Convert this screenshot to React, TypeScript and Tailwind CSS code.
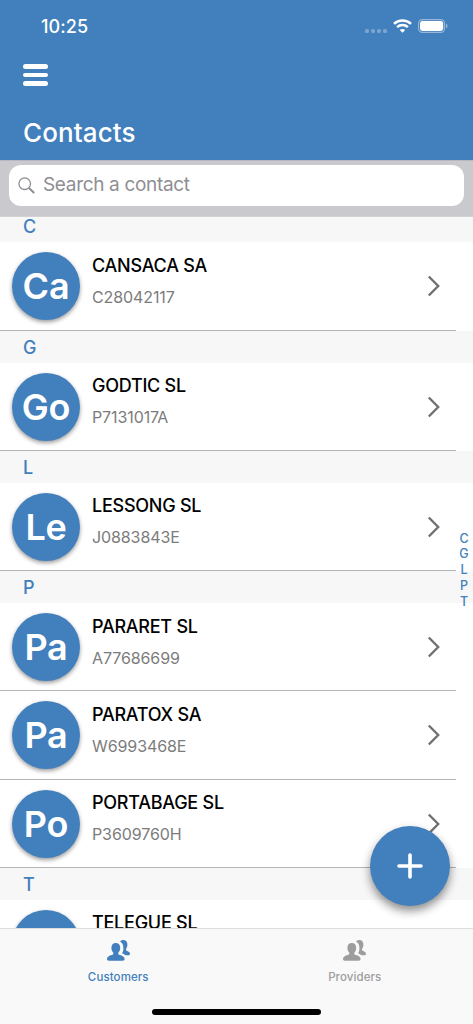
import { useState } from "react";

interface Contact {
  name: string;
  taxId: string;
  initials: string;
}

interface Section {
  letter: string;
  contacts: Contact[];
}

const sections: Section[] = [
  { letter: "C", contacts: [{ name: "CANSACA SA", taxId: "C28042117", initials: "Ca" }] },
  { letter: "G", contacts: [{ name: "GODTIC SL", taxId: "P7131017A", initials: "Go" }] },
  { letter: "L", contacts: [{ name: "LESSONG SL", taxId: "J0883843E", initials: "Le" }] },
  {
    letter: "P",
    contacts: [
      { name: "PARARET SL", taxId: "A77686699", initials: "Pa" },
      { name: "PARATOX SA", taxId: "W6993468E", initials: "Pa" },
      { name: "PORTABAGE SL", taxId: "P3609760H", initials: "Po" },
    ],
  },
  { letter: "T", contacts: [{ name: "TELEGUE SL", taxId: "", initials: "" }] },
];

function StatusBar() {
  return (
    <div className="flex h-[52px] items-center justify-between pr-[25px] pl-[41px]">
      <span className="mt-[2px] text-[18px] leading-none font-[550] tracking-[0.1px]">10:25</span>
      <div className="flex items-center">
        <div className="mt-[9px] mr-[6px] flex gap-[2px]">
          {[0, 1, 2, 3].map((dot) => (
            <span key={dot} className="size-1 rounded-[1.5px] bg-white/30" />
          ))}
        </div>
        <svg className="h-[14px] w-[19px]" viewBox="0 0 19 14" fill="none" stroke="white" strokeWidth="2.5">
          <path d="M1 4.9C5.7.4 13.3.4 18 4.9" />
          <path d="M4.1 8.2c3-2.8 7.8-2.8 10.8 0" />
          <path d="M9.5 13.7 6.8 11c1.5-1.4 3.9-1.4 5.4 0Z" fill="white" stroke="none" />
        </svg>
        <svg className="ml-[6px] h-[14px] w-[30px]" viewBox="0 0 30 14">
          <rect x=".6" y=".6" width="26" height="12.8" rx="3.8" fill="none" stroke="white" strokeOpacity=".45" strokeWidth="1.1" />
          <rect x="2" y="2" width="23.2" height="10" rx="2.4" fill="white" />
          <path d="M28 4.8c2.1.8 2.1 3.6 0 4.4Z" fill="white" fillOpacity=".45" />
        </svg>
      </div>
    </div>
  );
}

function Header() {
  return (
    <header className="h-40 shrink-0 bg-[#427fbd] text-white">
      <StatusBar />
      <button aria-label="Menu" className="mt-3 ml-[23px] flex w-[25px] flex-col gap-1">
        <span className="h-[4.5px] w-full rounded-full bg-white" />
        <span className="h-[4.5px] w-full rounded-full bg-white" />
        <span className="h-[4.5px] w-full rounded-full bg-white" />
      </button>
      <h1 className="mt-[31px] ml-[23px] text-[26px] leading-8 font-[550] tracking-[0.1px]">Contacts</h1>
    </header>
  );
}

function SearchBar() {
  const [query, setQuery] = useState("");
  return (
    <div className="h-[57px] shrink-0 border-t border-b border-t-[#b5b8c2] border-b-[#d3d3d6] bg-[#c9c9ce] px-[9px] pt-1">
      <label className="flex h-[41px] items-center rounded-xl bg-white pl-[9px]">
        <svg className="size-[17px] shrink-0" viewBox="0 0 17 17" fill="none" stroke="#8e8e93">
          <circle cx="6.7" cy="6.7" r="5.8" strokeWidth="1.3" />
          <path d="m11 11 5.2 5" strokeWidth="2" />
        </svg>
        <input
          value={query}
          onChange={(e) => setQuery(e.target.value)}
          placeholder="Search a contact"
          className="ml-2 w-full text-[19px] tracking-[-0.33px] outline-none placeholder:text-[#8e8e93]"
        />
      </label>
    </div>
  );
}

function ContactRow({ contact }: { contact: Contact }) {
  return (
    <li className="h-[88.2px] bg-white">
      <div className="mr-[17px] flex h-full border-b-[1.5px] border-[#b4b4b4] pl-3">
        <div className="mt-[10px] flex size-[68px] shrink-0 items-center justify-center rounded-full bg-[#427fbd] text-[36px] font-[570] tracking-[-0.2px] text-white shadow-[0_2px_4px_rgba(0,0,0,0.4)]">
          {contact.initials}
        </div>
        <div className="ml-3 flex-1 pt-[11.5px]">
          <p className="text-[18px] leading-6 font-medium tracking-[-0.25px] whitespace-nowrap text-black">{contact.name}</p>
          <p className="mt-[7px] text-[16px] leading-6 tracking-[-0.1px] text-[#7c7c7c]">{contact.taxId}</p>
        </div>
        <svg className="mt-[33px] mr-[15px] h-[22px] w-[14px]" viewBox="0 0 14 22" fill="none" stroke="#707070" strokeWidth="2.4">
          <path d="m1.8 1.5 9.4 9.5-9.4 9.5" />
        </svg>
      </div>
    </li>
  );
}

function ContactList() {
  return (
    <main className="min-h-0 flex-1 overflow-hidden">
      <div className="-mt-[6.7px]">
        {sections.map((section) => (
          <section key={section.letter}>
            <h2 className="h-[32.1px] bg-[#f7f7f7] pl-[23px] text-[18px] leading-[34px] font-[550] text-[#427fbd]">
              {section.letter}
            </h2>
            <ul>
              {section.contacts.map((contact) => (
                <ContactRow key={contact.name} contact={contact} />
              ))}
            </ul>
          </section>
        ))}
      </div>
    </main>
  );
}

function LetterIndex() {
  return (
    <nav className="absolute top-[530.5px] right-0 flex w-[18px] flex-col text-center text-[12.5px] leading-[15.8px] font-[550] text-[#427fbd]">
      {sections.map((section) => (
        <a key={section.letter}>{section.letter}</a>
      ))}
    </nav>
  );
}

function PeopleIcon() {
  return (
    <svg className="h-[21px] w-[23px]" viewBox="0 0 23 21" fill="currentColor">
      <path d="M8.8 3c2.8 0 4.4 1.8 4.4 4.8 0 2.2-.8 3.8-1.9 5-.3 1.3.2 1.9 1.5 2.3 2.6.8 4.8 1.6 4.8 3.9 0 1.3-.7 1.7-1.8 1.7H1.8C.7 20.7 0 20.3 0 19c0-2.3 2.2-3.1 4.8-3.9 1.3-.4 1.8-1 1.5-2.3-1.1-1.2-1.9-2.8-1.9-5C4.4 4.8 6 3 8.800 3Z" />
      <path d="M13.1 1.500C13.900.5 14.900 0 16.200 0c2.800 0 4.300 1.700 4.200 4.800-.1 1.800-.5 2.800-1.200 4-.5.9-.2 1.700.9 2.100 1.900.8 2.900 1.500 2.900 3.200 0 .7-.4 1.100-1.200 1.100h-3.400c-1-.9-2.200-1.500-3.400-1.900 1-1.300 1.500-3 1.400-5.300 0-3-1-5.200-3.300-6.500Z" />
    </svg>
  );
}

function TabBar() {
  return (
    <footer className="flex h-24 shrink-0 flex-col items-center border-t border-[#dedede] bg-[#f9f9f9]">
      <div className="flex w-full">
        <button className="flex flex-1 flex-col items-center pt-[11px] text-[#427fbd]">
          <PeopleIcon />
          <span className="mt-2 text-[11.5px] leading-4 font-medium tracking-[0.1px]">Customers</span>
        </button>
        <button className="flex flex-1 flex-col items-center pt-[11px] text-[#9d9d9d]">
          <PeopleIcon />
          <span className="mt-2 text-[11.5px] leading-4 font-medium tracking-[0.1px]">Providers</span>
        </button>
      </div>
      <div className="mt-[24px] h-[6px] w-[169px] rounded-full bg-black" />
    </footer>
  );
}

export default function App() {
  return (
    <div className="relative flex h-[1024px] w-[473px] flex-col overflow-hidden bg-white font-['Inter','Liberation_Sans',sans-serif]">
      <Header />
      <SearchBar />
      <ContactList />
      <TabBar />
      <LetterIndex />
      <button
        aria-label="Add contact"
        className="absolute top-[826px] left-[370px] flex size-20 items-center justify-center rounded-full bg-[#427fbd] shadow-[0_5px_10px_rgba(0,0,0,0.45)]"
      >
        <svg className="size-[26px]" viewBox="0 0 26 26" stroke="white" strokeWidth="3.6" strokeLinecap="round">
          <path d="M13 2v22M2 13h22" />
        </svg>
      </button>
    </div>
  );
}
